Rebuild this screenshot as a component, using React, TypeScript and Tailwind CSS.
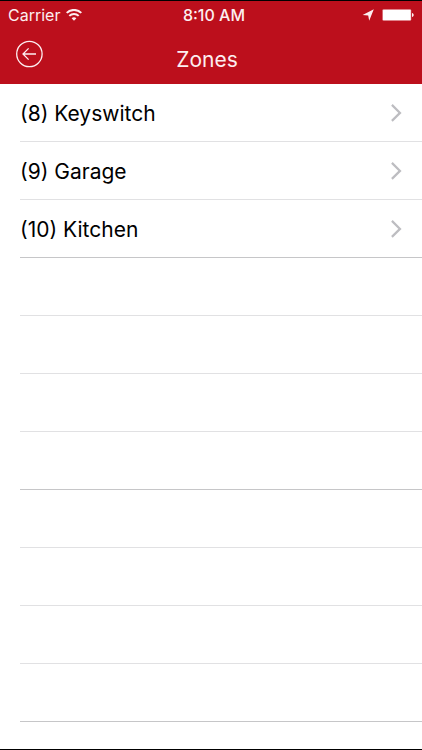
import React from 'react';

interface Zone {
  id: number;
  name: string;
}

const zones: Zone[] = [
  { id: 8, name: 'Keyswitch' },
  { id: 9, name: 'Garage' },
  { id: 10, name: 'Kitchen' },
];

const ROW_COUNT = 11;

const WifiIcon: React.FC = () => (
  <svg className="h-3 w-4" viewBox="0 0 16 12" fill="none" stroke="currentColor" strokeWidth={2}>
    <path d="M0.7 3.9a10.4 10.4 0 0 1 14.6 0" />
    <path d="M3.3 6.9a6.7 6.7 0 0 1 9.4 0" />
    <path d="M8 11.8 5.6 9.3a3.5 3.5 0 0 1 4.8 0z" fill="currentColor" stroke="none" />
  </svg>
);

const LocationIcon: React.FC = () => (
  <svg className="h-3 w-3" viewBox="0 0 12 12" fill="currentColor">
    <path d="M11.8 0.2 7.2 11.8 6.2 6.4 0.6 6z" />
  </svg>
);

const BatteryIcon: React.FC = () => (
  <svg className="h-3 w-8" viewBox="0 0 32 12" fill="currentColor">
    <rect x="0.4" y="0.2" width="28.8" height="11.6" rx="1.4" opacity="0.7" />
    <rect x="1" y="1" width="27.6" height="10" rx="0.6" fill="white" />
    <path d="M30 4v4c1-.2 1.7-1 1.7-2s-.7-1.8-1.7-2z" />
  </svg>
);

const BackIcon: React.FC = () => (
  <svg className="h-7 w-7" viewBox="0 0 28 28" fill="none" stroke="currentColor" strokeWidth={1.3}>
    <circle cx="13.4" cy="14" r="12.7" />
    <path d="M20 14H7M12.6 8.4 7 14l5.6 5.6" />
  </svg>
);

const ChevronIcon: React.FC = () => (
  <svg className="h-5 w-3 text-[#bdbdc1]" viewBox="0 0 12 20" fill="none" stroke="currentColor" strokeWidth={2.2}>
    <path d="M1.9 0.9 10 8.9l-8.1 8" />
  </svg>
);

const StatusBar: React.FC = () => (
  <div className="grid h-7 grid-cols-3 items-center px-2 text-base">
    <div className="flex items-center gap-1.5">
      <span>Carrier</span>
      <WifiIcon />
    </div>
    <span className="pl-1.5 text-center font-medium">8:10 AM</span>
    <div className="flex items-center justify-end gap-2">
      <LocationIcon />
      <BatteryIcon />
    </div>
  </div>
);

export default function App() {
  return (
    <div className="flex min-h-screen flex-col border-y border-black bg-white font-['Inter',sans-serif] text-black">
      <header className="bg-[#bc0f1c] text-[#fdeef0]">
        <StatusBar />
        <div className="grid h-[55px] grid-cols-3 items-center pr-6 pl-4">
          <button type="button" aria-label="Back" className="mb-1.5 w-7">
            <BackIcon />
          </button>
          <h1 className="pt-1.5 text-center text-[21px] leading-7">Zones</h1>
        </div>
      </header>

      <ul className="grow">
        {Array.from({ length: ROW_COUNT }, (_, index) => {
          const zone = zones[index];
          // every fourth separator renders a little darker
          const border = index % 4 === 2 ? 'border-[#c6c6c8]' : 'border-[#e1e1e3]';
          return (
            <li key={index} className={`ml-5 h-[58px] border-b ${border}`}>
              {zone && (
                <button type="button" className="flex h-full w-full items-center justify-between pt-0.5 pr-5 text-left text-[21px]">
                  <span>
                    ({zone.id}) {zone.name}
                  </span>
                  <ChevronIcon />
                </button>
              )}
            </li>
          );
        })}
      </ul>
    </div>
  );
}
